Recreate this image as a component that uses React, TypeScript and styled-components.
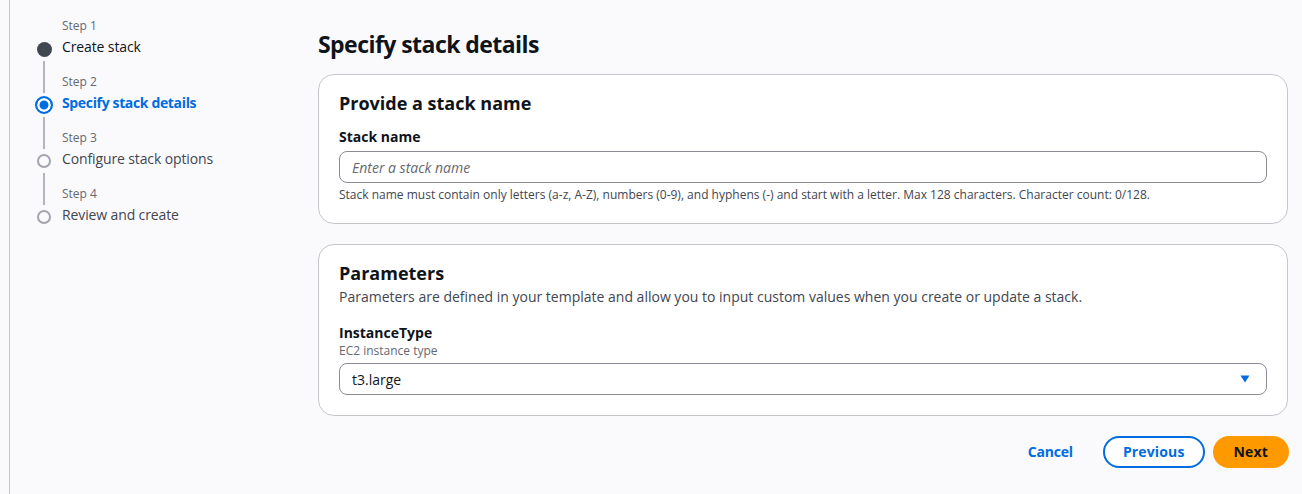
import React from "react";
import styled, { createGlobalStyle, css } from "styled-components";

const GlobalStyle = createGlobalStyle`
  html, body { margin: 0; padding: 0; }
  body {
    background: #fafafd;
    font-family: "Open Sans", "Helvetica Neue", Roboto, Arial, sans-serif;
    color: #0f141a;
    -webkit-font-smoothing: antialiased;
  }
  *, *::before, *::after { box-sizing: border-box; }
`;

const Page = styled.div`
  display: flex;
  min-height: 494px;
  padding-left: 9px;
`;

const Nav = styled.nav`
  flex: 0 0 309px;
  border-left: 1px solid #c6c6cd;
  padding: 17px 0 0 25px;
`;

const StepList = styled.ol`
  list-style: none;
  margin: 0;
  padding: 0;
`;

const StepItem = styled.li`
  display: flex;
  height: 56px;
`;

const Rail = styled.div`
  width: 18px;
  display: flex;
  flex-direction: column;
  align-items: center;
  margin-right: 9px;
`;

const Line = styled.div<{ $hidden?: boolean; $grow?: boolean }>`
  width: 2px;
  background: ${(p) => (p.$hidden ? "transparent" : "#b4b4bb")};
  ${(p) =>
    p.$grow
      ? css`
          flex: 1;
          margin-top: 3px;
        `
      : css`
          height: 20px;
          margin-bottom: 3px;
        `}
`;

type StepState = "visited" | "active" | "unvisited";

const Circle = styled.div<{ $state: StepState }>`
  flex: 0 0 18px;
  width: 18px;
  height: 18px;
  display: flex;
  align-items: center;
  justify-content: center;
  &::before {
    content: "";
    display: block;
    flex: none;
    border-radius: 50%;
    ${(p) =>
      p.$state === "visited"
        ? css`
            width: 15px;
            height: 15px;
            background: #414750;
          `
        : p.$state === "active"
        ? css`
            width: 18px;
            height: 18px;
            border: 2px solid #006ce0;
            background: #006ce0;
            box-shadow: inset 0 0 0 2.5px #ffffff;
          `
        : css`
            width: 14px;
            height: 14px;
            border: 2px solid #a4a4ad;
            background: transparent;
          `}
  }
`;

const StepText = styled.div`
  display: flex;
  flex-direction: column;
`;

const StepNumber = styled.span`
  margin-top: 1px;
  font-size: 12px;
  line-height: 16px;
  color: #656871;
`;

const StepTitle = styled.span<{ $state: StepState }>`
  margin-top: 3px;
  font-size: 14px;
  line-height: 20px;
  letter-spacing: ${(p) => (p.$state === "active" ? "-0.35px" : "-0.12px")};
  font-weight: ${(p) => (p.$state === "active" ? 700 : 400)};
  color: ${(p) =>
    p.$state === "active" ? "#006ce0" : p.$state === "visited" ? "#0f141a" : "#424650"};
`;

const Main = styled.main`
  flex: 0 0 970px;
  padding-top: 29px;
  display: flex;
  flex-direction: column;
`;

const H1 = styled.h1`
  margin: 0 0 15px;
  font-size: 23px;
  line-height: 30px;
  font-weight: 700;
  color: #0f141a;
  letter-spacing: -0.55px;
`;

const Cards = styled.div`
  display: flex;
  flex-direction: column;
  gap: 20px;
`;

const Card = styled.section`
  background: #ffffff;
  border: 1px solid #c6c6cd;
  border-radius: 16px;
  padding: 17px 20px 20px;
  display: flex;
  flex-direction: column;
`;

const H2 = styled.h2`
  margin: 0;
  font-size: 18px;
  line-height: 22px;
  font-weight: 700;
  color: #0f141a;
`;

const Description = styled.p`
  margin: 3px 0 0;
  font-size: 14px;
  line-height: 20px;
  color: #424650;
`;

const FieldLabel = styled.label<{ $top: number }>`
  margin-top: ${(p) => p.$top}px;
  font-size: 14px;
  line-height: 18px;
  font-weight: 700;
  color: #0f141a;
`;

const FieldHint = styled.span`
  margin-top: 1px;
  font-size: 12px;
  line-height: 16px;
  color: #656871;
`;

const Constraint = styled.span`
  margin-top: 4px;
  font-size: 12px;
  line-height: 16px;
  color: #424650;
`;

const Input = styled.input`
  margin-top: 5px;
  height: 32px;
  width: 100%;
  border: 1px solid #8c8c94;
  border-radius: 8px;
  padding: 0 12px;
  font-family: inherit;
  font-size: 14px;
  color: #0f141a;
  background: #ffffff;
  outline: none;
  &::placeholder {
    font-style: italic;
    color: #656871;
  }
`;

const Select = styled.button`
  margin-top: 4px;
  height: 32px;
  width: 100%;
  border: 1px solid #8c8c94;
  border-radius: 8px;
  padding: 0 16px 0 12px;
  display: flex;
  align-items: center;
  justify-content: space-between;
  font-family: inherit;
  font-size: 14px;
  color: #0f141a;
  background: #ffffff;
  cursor: pointer;
`;

const Actions = styled.div`
  margin-top: 20px;
  margin-right: -1px;
  display: flex;
  justify-content: flex-end;
  align-items: center;
  gap: 8px;
`;

type Variant = "link" | "normal" | "primary";

const Button = styled.button<{ $variant: Variant }>`
  height: 32px;
  padding: 0 18px;
  border-radius: 20px;
  border: 2px solid transparent;
  font-family: inherit;
  font-size: 14px;
  font-weight: 700;
  line-height: 20px;
  letter-spacing: 0.15px;
  cursor: pointer;
  ${(p) =>
    p.$variant === "link"
      ? css`
          background: transparent;
          color: #006ce0;
          letter-spacing: -0.2px;
          margin-right: 2px;
        `
      : p.$variant === "normal"
      ? css`
          background: #ffffff;
          border-color: #006ce0;
          color: #006ce0;
        `
      : css`
          background: #ff9900;
          border-color: #ff9900;
          color: #0f141a;
          padding: 0 19px;
        `}
`;

const Caret = () => (
  <svg width="10" height="8" viewBox="0 0 10 8" aria-hidden="true">
    <path d="M0.5 0.5 H9.5 L5 7.5 Z" fill="#006ce0" />
  </svg>
);

const steps: { title: string; state: StepState }[] = [
  { title: "Create stack", state: "visited" },
  { title: "Specify stack details", state: "active" },
  { title: "Configure stack options", state: "unvisited" },
  { title: "Review and create", state: "unvisited" },
];

export default function App() {
  return (
    <>
      <GlobalStyle />
      <Page>
        <Nav>
          <StepList>
            {steps.map((s, i) => (
              <StepItem key={s.title}>
                <Rail>
                  <Line $hidden={i === 0} />
                  <Circle $state={s.state} />
                  <Line $grow $hidden={i === steps.length - 1} />
                </Rail>
                <StepText>
                  <StepNumber>Step {i + 1}</StepNumber>
                  <StepTitle $state={s.state}>{s.title}</StepTitle>
                </StepText>
              </StepItem>
            ))}
          </StepList>
        </Nav>
        <Main>
          <H1>Specify stack details</H1>
          <Cards>
            <Card>
              <H2>Provide a stack name</H2>
              <FieldLabel $top={14}>Stack name</FieldLabel>
              <Input placeholder="Enter a stack name" />
              <Constraint>
                Stack name must contain only letters (a-z, A-Z), numbers (0-9), and hyphens (-) and
                start with a letter. Max 128 characters. Character count: 0/128.
              </Constraint>
            </Card>
            <Card>
              <H2>Parameters</H2>
              <Description>
                Parameters are defined in your template and allow you to input custom values when you
                create or update a stack.
              </Description>
              <FieldLabel $top={17}>InstanceType</FieldLabel>
              <FieldHint>EC2 instance type</FieldHint>
              <Select>
                <span>t3.large</span>
                <Caret />
              </Select>
            </Card>
          </Cards>
          <Actions>
            <Button $variant="link">Cancel</Button>
            <Button $variant="normal">Previous</Button>
            <Button $variant="primary">Next</Button>
          </Actions>
        </Main>
      </Page>
    </>
  );
}
